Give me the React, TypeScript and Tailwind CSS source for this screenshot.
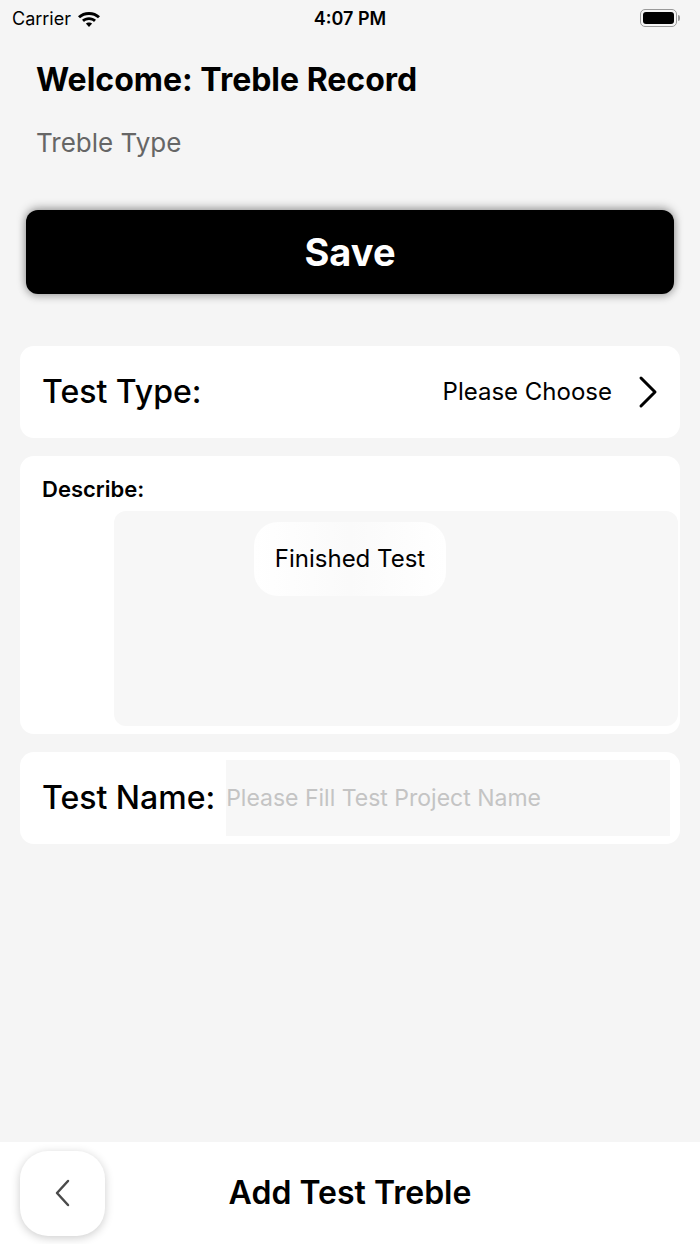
import React from 'react';

const font = { fontFamily: 'Inter, "Noto Sans", sans-serif' };

function Wifi() {
  return (
    <svg width="24" height="18" viewBox="0 0 24 18" fill="black">
      <path d="M12 3C7.7 3 3.9 4.6 1 7.2l2 2.1C5.4 7.2 8.5 6 12 6s6.6 1.2 9 3.3l2-2.1C20.1 4.6 16.3 3 12 3z" />
      <path d="M12 8.2c-2.7 0-5.1 1-7 2.6l2 2.1c1.3-1.1 3.1-1.8 5-1.8s3.7.7 5 1.8l2-2.1c-1.9-1.6-4.3-2.6-7-2.6z" />
      <path d="M12 13.4c-1.3 0-2.4.5-3.2 1.2L12 18l3.2-3.4c-.8-.7-1.9-1.2-3.2-1.2z" />
    </svg>
  );
}

function Battery() {
  return (
    <div className="flex items-center">
      <div className="w-[37px] h-[18px] rounded-[5px] border border-[#9a9a9a] p-[2px]">
        <div className="w-full h-full rounded-[3px] bg-black" />
      </div>
      <div className="w-[2px] h-[6px] rounded-r bg-[#9a9a9a] ml-[1px]" />
    </div>
  );
}

export default function App() {
  return (
    <div className="w-[700px] h-[1244px] bg-[#f5f5f5] flex flex-col text-black" style={font}>
      {/* status bar */}
      <div className="h-[36px] flex items-center justify-between px-[12px] relative">
        <div className="flex items-center gap-[6px] text-[18px]">
          <span>Carrier</span>
          <Wifi />
        </div>
        <span className="absolute left-1/2 -translate-x-1/2 text-[18px] font-semibold">4:07 PM</span>
        <div className="pr-[8px]">
          <Battery />
        </div>
      </div>

      <div className="flex-1 flex flex-col">
        <div className="px-[36px] pt-[24px]">
          <h1 className="text-[32px] font-bold leading-[40px]">Welcome: Treble Record</h1>
          <p className="text-[26px] text-[#666666] leading-[34px] mt-[26px]">Treble Type</p>
        </div>

        <div className="px-[26px] mt-[50px]">
          <button className="w-full h-[84px] rounded-[12px] bg-black text-white text-[38px] font-bold shadow-[0_-2px_10px_rgba(0,0,0,0.35),0_3px_8px_rgba(0,0,0,0.2)]">
            Save
          </button>
        </div>

        <div className="px-[20px] mt-[52px] flex flex-col gap-[18px]">
          <div className="h-[92px] bg-white rounded-[14px] flex items-center justify-between pl-[22px] pr-[22px]">
            <span className="text-[32px] font-medium">Test Type:</span>
            <div className="flex items-center gap-[26px]">
              <span className="text-[24px]">Please Choose</span>
              <svg width="20" height="34" viewBox="0 0 20 34" fill="none" stroke="black" strokeWidth="3" strokeLinecap="round" strokeLinejoin="round">
                <path d="M3 3l14 14L3 31" />
              </svg>
            </div>
          </div>

          <div className="h-[278px] bg-white rounded-[14px] flex flex-col pl-[22px] pr-[2px] pt-[18px] pb-[8px]">
            <span className="text-[22px] font-semibold leading-[30px]">Describe:</span>
            <div className="flex-1 ml-[72px] mt-[7px] bg-[#f7f7f7] rounded-[12px] pt-[11px] flex justify-center pr-[92px]">
              <div className="h-[74px] px-[21px] rounded-[24px] bg-gradient-to-r from-white via-[#fafafa] to-white flex items-center text-[24px] self-start">
                Finished Test
              </div>
            </div>
          </div>

          <div className="h-[92px] bg-white rounded-[14px] flex items-center pl-[22px] pr-[10px] gap-[11px]">
            <span className="text-[32px] font-medium whitespace-nowrap">Test Name:</span>
            <input
              className="flex-1 h-[76px] bg-[#f7f7f7] outline-none text-[23px] placeholder:text-[#c4c4c4] px-0"
              style={font}
              placeholder="Please Fill Test Project Name"
            />
          </div>
        </div>
      </div>

      {/* bottom nav */}
      <div className="h-[102px] bg-white flex items-center relative">
        <div className="ml-[20px] w-[85px] h-[85px] rounded-[28px] bg-white shadow-[0_2px_10px_rgba(0,0,0,0.2)] flex items-center justify-center">
          <svg width="18" height="28" viewBox="0 0 18 28" fill="none" stroke="#4a4a4a" strokeWidth="2.5" strokeLinecap="round" strokeLinejoin="round">
            <path d="M14 2L3 14l11 12" />
          </svg>
        </div>
        <span className="absolute left-1/2 -translate-x-1/2 text-[32px] font-semibold">Add Test Treble</span>
      </div>
    </div>
  );
}
